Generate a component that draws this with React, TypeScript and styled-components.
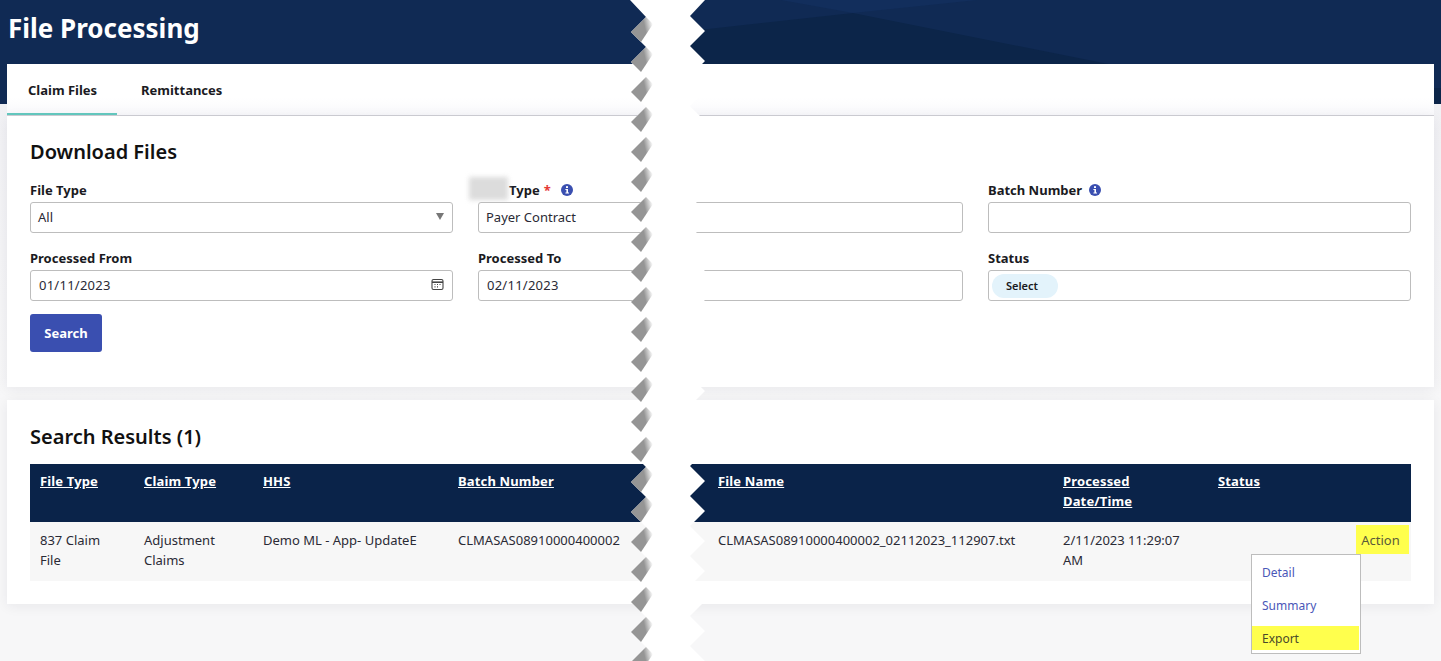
import React from "react";
import styled, { createGlobalStyle } from "styled-components";

const Global = createGlobalStyle`
  html, body { margin: 0; padding: 0; height: 661px; overflow: hidden; background: #f7f7f8; }
  * { box-sizing: border-box; }
  body { font-family: "Noto Sans", "Open Sans", "Liberation Sans", sans-serif; font-size: 13px; color: #212529; }
`;

const Page = styled.div`
  position: relative;
  width: 1441px;
  height: 661px;
  overflow: hidden;
  background: linear-gradient(#efeff3 0, #f7f7f8 400px);
`;
const Header = styled.header`
  position: relative;
  height: 104px;
  background: #102a54;
  padding: 10px 8px 0;
  overflow: hidden;
`;
const HeaderArt = styled.svg`
  position: absolute;
  top: 0;
  left: 0;
`;
const Title = styled.h1`
  position: relative;
  margin: 0;
  font-size: 26px;
  line-height: 36px;
  font-weight: 700;
  color: #fff;
`;
const Main = styled.main`
  position: relative;
  margin: -40px 7px 0;
  width: 1427px;
`;
const Tabs = styled.nav`
  display: flex;
  height: 52px;
  background: linear-gradient(#fff 0, #fff 34px, #f8f8fb 51px);
  border-bottom: 1px solid #cfcfd4;
`;
const Tab = styled.div<{ $active?: boolean }>`
  height: 51px;
  width: ${(p) => (p.$active ? "110px" : "auto")};
  padding: 16px 0 0 ${(p) => (p.$active ? "21px" : "24px")};
  font-weight: 700;
  line-height: 20px;
  color: #1a1a22;
  border-bottom: 2px solid ${(p) => (p.$active ? "#62c6bd" : "transparent")};
`;
const Card = styled.section`
  background: #fff;
  box-shadow: 0 2px 12px rgba(30, 30, 60, 0.07);
  padding: 23px 23px 0;
`;
const FormCard = styled(Card)`
  height: 271px;
  margin-bottom: 13px;
`;
const ResultsCard = styled(Card)`
  height: 204px;
  padding-top: 24px;
`;
const CardTitle = styled.h2`
  margin: 0;
  font-size: 20px;
  line-height: 26px;
  font-weight: 600;
  color: #111;
`;
const FormGrid = styled.div`
  display: grid;
  grid-template-columns: 423px 485px 423px;
  column-gap: 25px;
  row-gap: 14px;
  margin-top: 14px;
`;
const Field = styled.div`
  position: relative;
`;
const Label = styled.label<{ $indent?: boolean }>`
  display: flex;
  align-items: center;
  height: 22px;
  margin-bottom: 1px;
  padding-left: ${(p) => (p.$indent ? "31px" : "0")};
  font-weight: 700;
  color: #1a1a22;
`;
const Required = styled.span`
  color: #e53935;
  margin-left: 4px;
`;
const Blur = styled.span`
  position: absolute;
  left: -9px;
  top: -2px;
  width: 39px;
  height: 23px;
  background: #dcdcdc;
  filter: blur(2.5px);
`;
const InfoDot = styled.svg<{ $gap: number }>`
  margin-left: ${(p) => p.$gap}px;
`;
const Control = styled.div`
  position: relative;
  height: 31px;
  border: 1px solid #bdbdbd;
  border-radius: 3px;
  background: #fff;
  display: flex;
  align-items: center;
  padding: 0 7px 2px;
  color: #2a2a35;
  line-height: 20px;
`;
const DateText = styled.span`
  padding-left: 1px;
  letter-spacing: 0.25px;
`;
const Caret = styled.span`
  margin-left: auto;
  margin-right: 1px;
  width: 0;
  height: 0;
  border-left: 4.5px solid transparent;
  border-right: 4.5px solid transparent;
  border-top: 7px solid #777;
`;
const CalIcon = styled.svg`
  margin-left: auto;
  margin-right: 1px;
`;
const Chip = styled.span`
  margin: 2px 0 0 -4px;
  width: 66px;
  height: 24px;
  padding: 1px 6px 0 0;
  border-radius: 12px;
  background: #e3f3fb;
  display: flex;
  align-items: center;
  justify-content: center;
  font-size: 11px;
  font-weight: 600;
  color: #1a1a22;
`;
const SearchButton = styled.button`
  display: block;
  margin-top: 13px;
  width: 72px;
  height: 38px;
  border: 0;
  border-radius: 3px;
  background: #3a4fb0;
  color: #fff;
  font: 700 13px "Noto Sans", sans-serif;
`;
const Table = styled.div`
  margin-top: 14px;
  width: 1381px;
`;
const Row = styled.div<{ $head?: boolean }>`
  position: relative;
  display: grid;
  grid-template-columns: 104px 119px 195px 260px 345px 155px 203px;
  height: ${(p) => (p.$head ? "58px" : "59px")};
  background: ${(p) => (p.$head ? "#0a2349" : "#f7f7f7")};
  padding-top: ${(p) => (p.$head ? "7px" : "8px")};
  color: ${(p) => (p.$head ? "#fff" : "#2a2a35")};
  line-height: 20px;
`;
const Cell = styled.div`
  padding: 0 20px 0 10px;
`;
const HeadLink = styled.span`
  font-weight: 700;
  letter-spacing: 0.15px;
  text-decoration: underline;
`;
const ActionCell = styled.div`
  display: flex;
  justify-content: flex-end;
  padding: 0 2px 0 0;
  margin-top: -5px;
`;
const ActionButton = styled.div`
  width: 53px;
  height: 29px;
  background: #ffff4d;
  color: #5a5a3a;
  display: flex;
  align-items: center;
  justify-content: center;
  padding-right: 4px;
`;
const Menu = styled.div`
  position: absolute;
  left: 1244px;
  top: 490px;
  width: 110px;
  height: 100px;
  background: #fff;
  border: 1px solid #bdbdbd;
  padding-top: 5px;
`;
const MenuItem = styled.div<{ $hi?: boolean }>`
  height: 24px;
  margin: 0 1px 9px 0;
  padding-left: 10px;
  display: flex;
  align-items: center;
  font-size: 12px;
  background: ${(p) => (p.$hi ? "#ffff4d" : "transparent")};
  color: ${(p) => (p.$hi ? "#4a4a2a" : "#4a57b8")};
`;
const TearArt = styled.svg`
  position: absolute;
  top: 0;
  left: 0;
  pointer-events: none;
`;

const Info = ({ gap }: { gap: number }) => (
  <InfoDot $gap={gap} width="12" height="12" viewBox="0 0 12 12">
    <circle cx="6" cy="6" r="6" fill="#3a4fb0" />
    <rect x="5" y="2.2" width="2" height="1.8" fill="#fff" />
    <path d="M4.4 5h2.6v3.6h1v1H4.4v-1h1V6h-1z" fill="#fff" />
  </InfoDot>
);

const Calendar = () => (
  <CalIcon width="13" height="13" viewBox="0 0 13 13" fill="none" stroke="#444">
    <rect x="1" y="1.5" width="11" height="10" rx="1.5" strokeWidth="1.1" />
    <path d="M1 4.2h11" strokeWidth="1.6" />
    <path d="M3.5 6.5h1M6 6.5h1M8.500 6.500h1M3.500 8.800h1M6 8.800h1" strokeWidth="1.200" />
  </CalIcon>
);

const Tear = () => {
  const tips: number[] = [];
  for (let y = 2; y < 700; y += 30) tips.push(y);
  const left: string[] = ["630,0"];
  const right: string[] = ["705,0"];
  tips.forEach((y, i) => {
    if (i > 0) left.push(`631,${y}`);
    left.push(`646,${y + 15}`);
    if (i > 0) right.push(`705,${y - 1}`);
    right.push(`690,${y + 14}`);
  });
  const teeth = tips.slice(1).map((y) => `631,${y} 646,${y - 15} 653,${y - 8} 641,${y + 10}`);
  return (
    <TearArt width="1441" height="661" viewBox="0 0 1441 661">
      <defs>
        <linearGradient id="tooth" x1="0" y1="0.55" x2="1" y2="0.3">
          <stop offset="0" stopColor="#959595" />
          <stop offset="0.62" stopColor="#959595" />
          <stop offset="1" stopColor="#ffffff" />
        </linearGradient>
      </defs>
      <polygon points={[...left, ...right.reverse()].join(" ")} fill="#fff" />
      {teeth.map((p) => (
        <polygon key={p} points={p} fill="url(#tooth)" />
      ))}
    </TearArt>
  );
};

export default function App() {
  return (
    <Page>
      <Global />
      <Header>
        <HeaderArt width="1441" height="104" viewBox="0 0 1441 104">
          <polygon points="781,0 977,0 853,13" fill="#122e5c" />
          <polygon points="690,31 853,13 1248,92 1248,104 690,104" fill="#0c2549" />
          <polygon points="1434,88 1441,88 1441,104 1434,104" fill="#0c2549" />
        </HeaderArt>
        <Title>File Processing</Title>
      </Header>
      <Main>
        <Tabs>
          <Tab $active>Claim Files</Tab>
          <Tab>Remittances</Tab>
        </Tabs>
        <FormCard>
          <CardTitle>Download Files</CardTitle>
          <FormGrid>
            <Field>
              <Label>File Type</Label>
              <Control>
                All
                <Caret />
              </Control>
            </Field>
            <Field>
              <Label $indent>
                <Blur />
                Type<Required>*</Required>
                <Info gap={10} />
              </Label>
              <Control>Payer Contract</Control>
            </Field>
            <Field>
              <Label>
                Batch Number
                <Info gap={7} />
              </Label>
              <Control />
            </Field>
            <Field>
              <Label>Processed From</Label>
              <Control>
                <DateText>01/11/2023</DateText>
                <Calendar />
              </Control>
            </Field>
            <Field>
              <Label>Processed To</Label>
              <Control>
                <DateText>02/11/2023</DateText>
              </Control>
            </Field>
            <Field>
              <Label>Status</Label>
              <Control>
                <Chip>Select</Chip>
              </Control>
            </Field>
          </FormGrid>
          <SearchButton>Search</SearchButton>
        </FormCard>
        <ResultsCard>
          <CardTitle>Search Results (1)</CardTitle>
          <Table>
            <Row $head>
              <Cell><HeadLink>File Type</HeadLink></Cell>
              <Cell><HeadLink>Claim Type</HeadLink></Cell>
              <Cell><HeadLink>HHS</HeadLink></Cell>
              <Cell><HeadLink>Batch Number</HeadLink></Cell>
              <Cell><HeadLink>File Name</HeadLink></Cell>
              <Cell><HeadLink>Processed Date/Time</HeadLink></Cell>
              <Cell><HeadLink>Status</HeadLink></Cell>
            </Row>
            <Row>
              <Cell>837 Claim File</Cell>
              <Cell>Adjustment Claims</Cell>
              <Cell>Demo ML - App- UpdateE</Cell>
              <Cell>CLMASAS08910000400002</Cell>
              <Cell>CLMASAS08910000400002_02112023_112907.txt</Cell>
              <Cell>2/11/2023 11:29:07 AM</Cell>
              <ActionCell>
                <ActionButton>Action</ActionButton>
              </ActionCell>
            </Row>
          </Table>
        </ResultsCard>
        <Menu>
          <MenuItem>Detail</MenuItem>
          <MenuItem>Summary</MenuItem>
          <MenuItem $hi>Export</MenuItem>
        </Menu>
      </Main>
      <Tear />
    </Page>
  );
}
